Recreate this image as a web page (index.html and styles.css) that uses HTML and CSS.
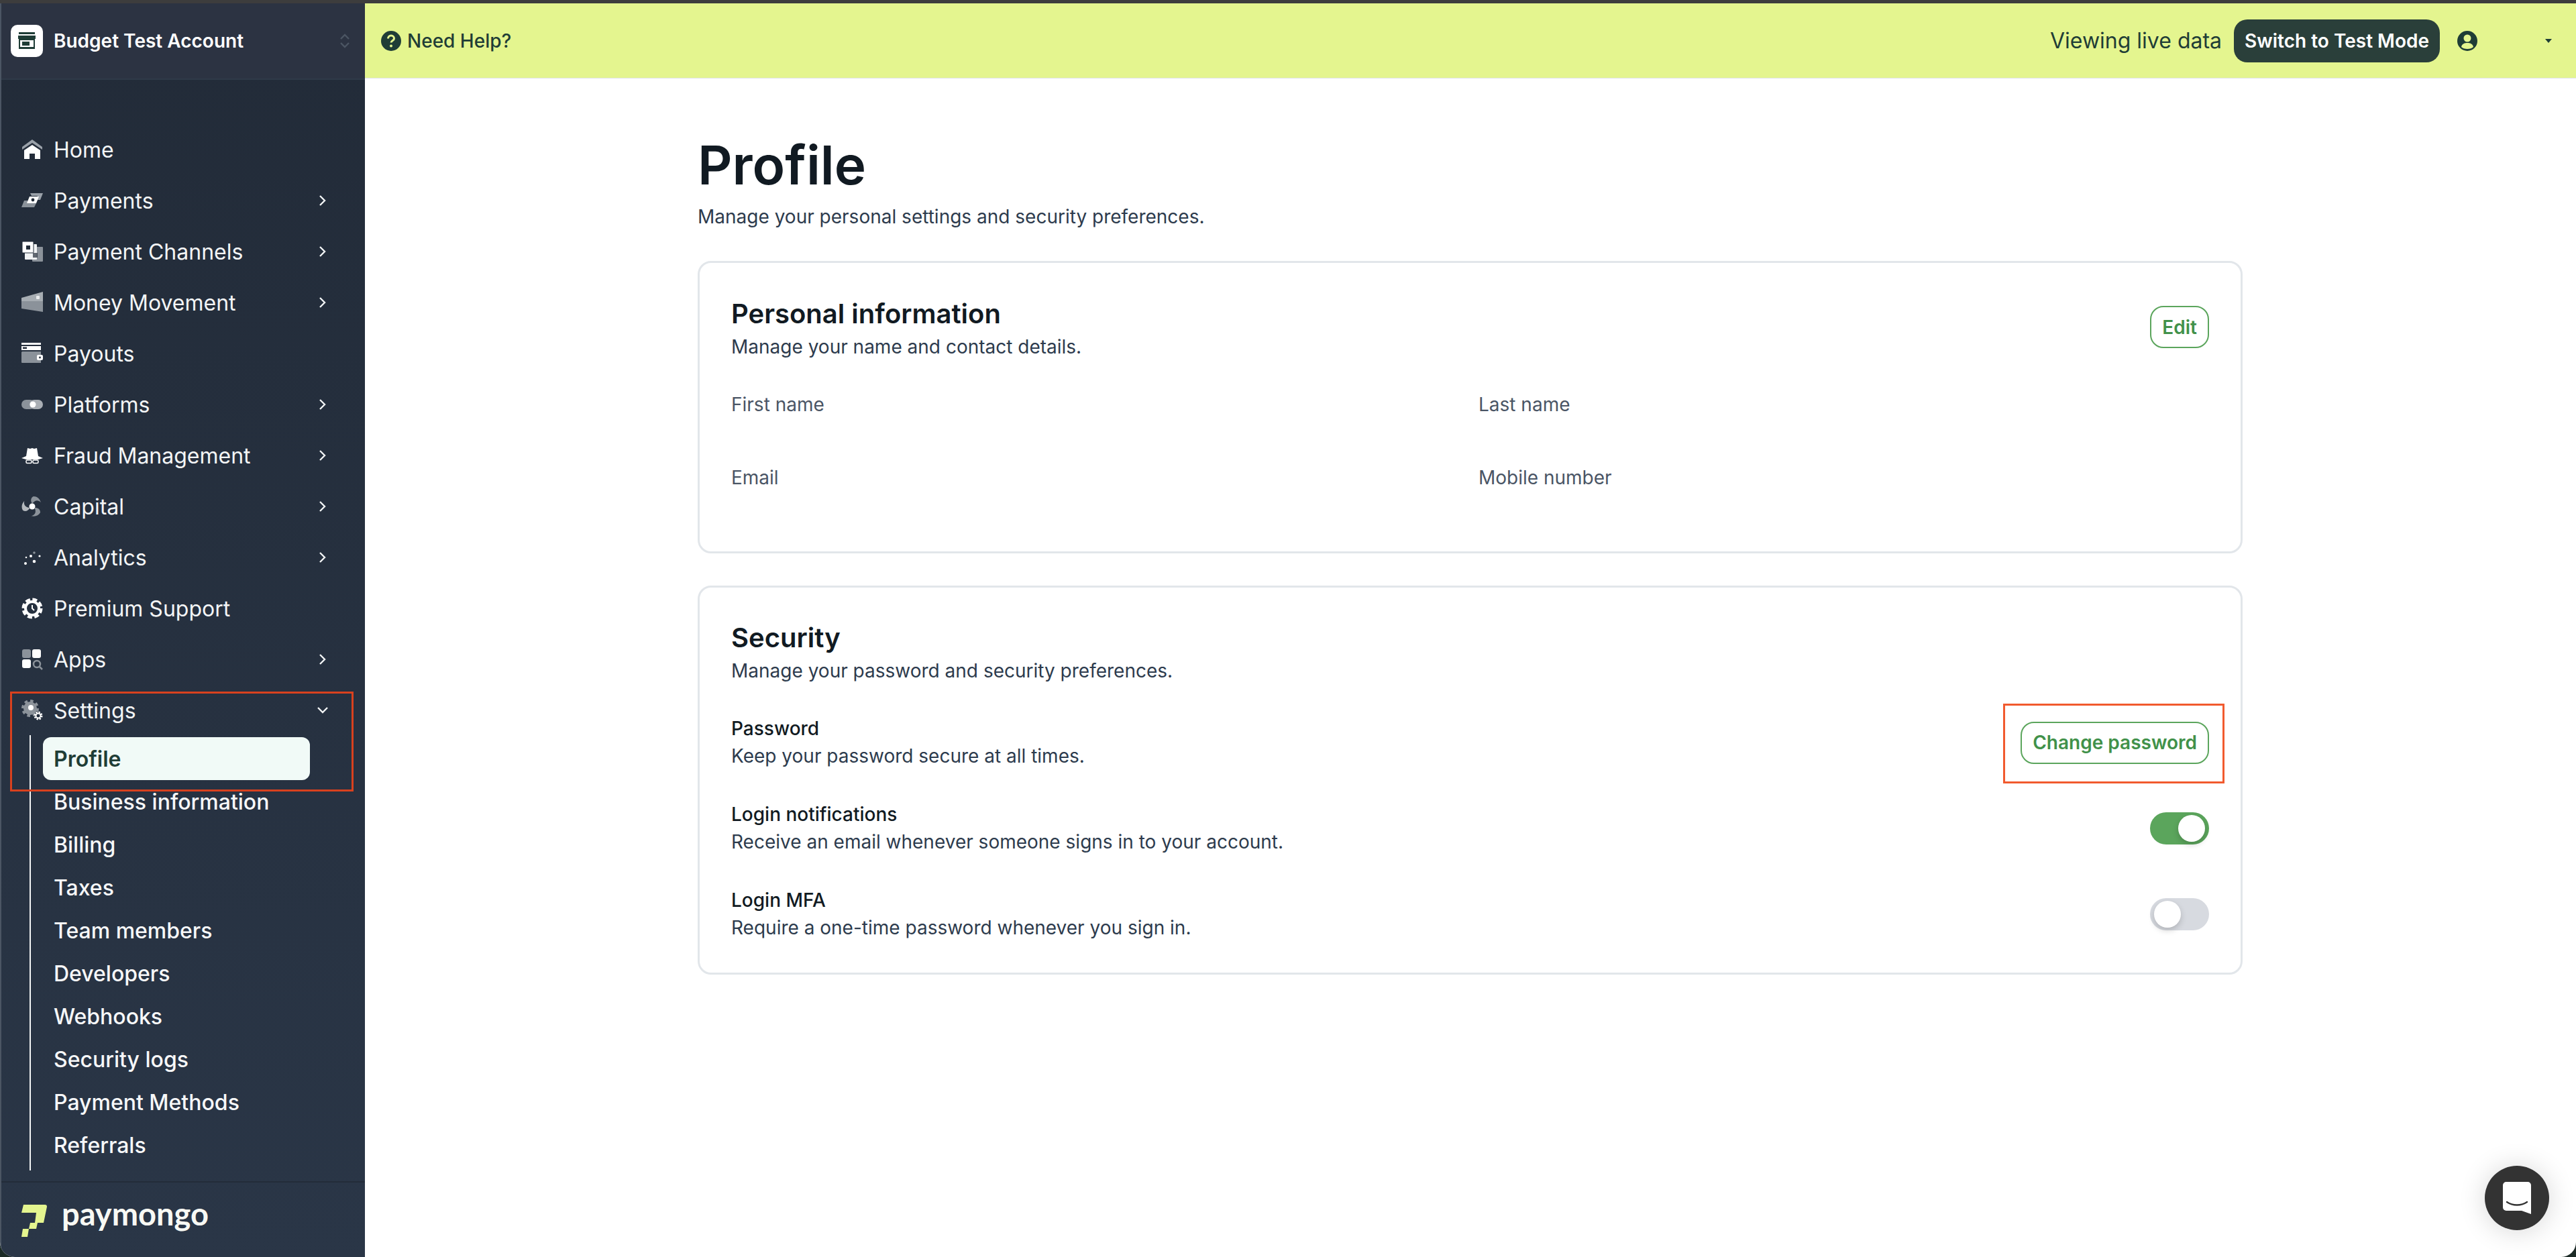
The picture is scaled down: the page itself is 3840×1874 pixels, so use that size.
FILE: index.html
```html
<!DOCTYPE html>
<html lang="en">
<head>
  <meta charset="UTF-8">
  <title>Profile - PayMongo</title>
  <link rel="stylesheet" href="styles.css">
</head>
<body>
  <div class="titlebar"></div>
  <div class="shell">
    <aside class="sidebar">
      <div class="account">
        <span class="account-logo">
          <svg width="28" height="28" viewBox="0 0 28 28"><path d="M2 1h24v3H2z" fill="#1f3d36"/><path d="M1 6h26v5h-1v15H2V11H1z" fill="#1f3d36"/><path d="M4 13h20v10H4z" fill="#fff"/><path d="M7 15h11v6H7z" fill="#1f3d36"/></svg>
        </span>
        <span class="account-name">Budget Test Account</span>
        <svg class="account-switch" width="14" height="22" viewBox="0 0 14 22" fill="none" stroke="#4b5563" stroke-width="2.4"><path d="M1 8l6-6 6 6M1 14l6 6 6-6"/></svg>
      </div>

      <nav class="nav">
        <a class="nav-item"><svg class="nav-icon" viewBox="0 0 32 32"><path d="M16 1L1 12v4L16 6l15 10v-4z" fill="#9aa1a9"/><path d="M16 9L4 17v13h8v-8h8v8h8V17z" fill="#fff"/></svg><span>Home</span></a>
        <a class="nav-item"><svg class="nav-icon" viewBox="0 0 32 32"><path d="M13 5h19l-4 10h-6l2-6h-9z" fill="#9aa1a9"/><path d="M4 16h6l-1 4h13l-3 6H0z" fill="#8b929a"/><path d="M12 10h14l-4 10H8z" fill="#fff"/><circle cx="17" cy="15" r="2.400" fill="#232c39"/></svg><span>Payments</span><svg class="nav-arrow" viewBox="0 0 12 18"><path d="M2 2l7 7-7 7"/></svg></a>
        <a class="nav-item"><svg class="nav-icon" viewBox="0 0 32 32"><rect x="16" y="9" width="16" height="22" rx="1" fill="#8b929a"/><rect x="5" y="5" width="18" height="23" rx="1" fill="#f1f3f4"/><rect x="1" y="1" width="17" height="17" rx="1" fill="#fff" stroke="#232c39" stroke-width="1"/><rect x="7" y="7" width="6" height="6" fill="#232c39"/><rect x="17" y="18" width="7" height="7" fill="#232c39" opacity=".7"/></svg><span>Payment Channels</span><svg class="nav-arrow" viewBox="0 0 12 18"><path d="M2 2l7 7-7 7"/></svg></a>
        <a class="nav-item"><svg class="nav-icon" viewBox="0 0 32 32"><path d="M0 9L32 0v14H0z" fill="#a7adb3"/><path d="M0 14h32v16L0 25z" fill="#8b929a"/><rect x="22" y="6" width="5" height="5" rx="1" fill="#e8eaec"/></svg><span>Money Movement</span><svg class="nav-arrow" viewBox="0 0 12 18"><path d="M2 2l7 7-7 7"/></svg></a>
        <a class="nav-item"><svg class="nav-icon" viewBox="0 0 32 32"><rect y="0" width="29" height="3" fill="#fff"/><rect y="5" width="29" height="6" fill="#fff"/><rect x="2" y="6.500" width="6" height="2.500" fill="#232c39"/><path d="M1 13h28v17H1a1 1 0 01-1-1V14z" fill="#8b929a"/><rect x="23" y="18" width="9" height="8" rx="2" fill="#fff"/><circle cx="27.500" cy="22" r="1.400" fill="#232c39"/></svg><span>Payouts</span></a>
        <a class="nav-item"><svg class="nav-icon" viewBox="0 0 32 32"><rect x="0" y="9" width="20" height="14" rx="7" fill="#8b929a"/><rect x="12" y="9" width="20" height="14" rx="7" fill="#a9aeb4"/><circle cx="17" cy="16" r="4.500" fill="#fff"/></svg><span>Platforms</span><svg class="nav-arrow" viewBox="0 0 12 18"><path d="M2 2l7 7-7 7"/></svg></a>
        <a class="nav-item"><svg class="nav-icon" viewBox="0 0 32 32"><path d="M9 5l4 1 3-1 3 1 4-1 2 12H7z" fill="#fff"/><path d="M0 20l7-3h18l7 3-7 2H7z" fill="#fff"/><rect x="7" y="23" width="8" height="4.500" rx="1.500" fill="none" stroke="#fff" stroke-width="1.500"/><rect x="17" y="23" width="8" height="4.500" rx="1.500" fill="none" stroke="#fff" stroke-width="1.500"/></svg><span>Fraud Management</span><svg class="nav-arrow" viewBox="0 0 12 18"><path d="M2 2l7 7-7 7"/></svg></a>
        <a class="nav-item"><svg class="nav-icon" viewBox="0 0 32 32"><g id="blade"><path d="M16 12C13 7 14 3 18 1c5 0 9 3 11 9-4-4-9-4-13 2z" fill="#8b929a"/></g><path d="M16 12C13 7 14 3 18 1c5 0 9 3 11 9-4-4-9-4-13 2z" fill="#8b929a" transform="rotate(120 16 16)"/><path d="M16 12C13 7 14 3 18 1c5 0 9 3 11 9-4-4-9-4-13 2z" fill="#b4b9be" transform="rotate(240 16 16)"/><circle cx="16" cy="16" r="4.500" fill="#fff"/></svg><span>Capital</span><svg class="nav-arrow" viewBox="0 0 12 18"><path d="M2 2l7 7-7 7"/></svg></a>
        <a class="nav-item"><svg class="nav-icon" viewBox="0 0 32 32"><g fill="#fff"><circle cx="6" cy="25" r="2"/><circle cx="7" cy="16" r="1.300"/><circle cx="14" cy="14" r="2"/><circle cx="19" cy="22" r="2.300"/><circle cx="27" cy="14" r="1.600"/></g><circle cx="19" cy="9" r="1.800" fill="#8b929a"/></svg><span>Analytics</span><svg class="nav-arrow" viewBox="0 0 12 18"><path d="M2 2l7 7-7 7"/></svg></a>
        <a class="nav-item"><svg class="nav-icon" viewBox="0 0 32 32"><circle cx="16" cy="16" r="13.500" fill="none" stroke="#fff" stroke-width="4" stroke-dasharray="7 3.600"/><circle cx="16" cy="16" r="10" fill="none" stroke="#fff" stroke-width="4"/><path d="M16 11v5l3 3" fill="none" stroke="#fff" stroke-width="2"/></svg><span>Premium Support</span></a>
        <a class="nav-item"><svg class="nav-icon" viewBox="0 0 32 32"><rect x="1" y="1" width="13" height="13" rx="3" fill="#8b929a"/><rect x="16" y="1" width="13" height="13" rx="3" fill="#fff"/><rect x="1" y="16" width="13" height="13" rx="3" fill="#fff"/><circle cx="23" cy="23" r="5" fill="none" stroke="#8b929a" stroke-width="2.500"/><path d="M27 27l4 4" stroke="#8b929a" stroke-width="2.500"/></svg><span>Apps</span><svg class="nav-arrow" viewBox="0 0 12 18"><path d="M2 2l7 7-7 7"/></svg></a>

        <div class="settings-group">
          <a class="nav-item"><svg class="nav-icon" viewBox="0 0 32 32"><circle cx="13" cy="13" r="11" fill="none" stroke="#8b929a" stroke-width="4" stroke-dasharray="4.500 4.100"/><circle cx="13" cy="13" r="10" fill="#8b929a"/><circle cx="14" cy="12" r="4" fill="#fff"/><circle cx="25" cy="24" r="5" fill="none" stroke="#fff" stroke-width="3" stroke-dasharray="2.200 1.700"/><circle cx="25" cy="24" r="3.500" fill="none" stroke="#fff" stroke-width="2"/></svg><span>Settings</span><svg class="nav-arrow" viewBox="0 0 18 12"><path d="M2 2l7 7 7-7"/></svg></a>
          <ul class="subnav">
            <li class="subnav-item active">Profile</li>
            <li class="subnav-item">Business information</li>
            <li class="subnav-item">Billing</li>
            <li class="subnav-item">Taxes</li>
            <li class="subnav-item">Team members</li>
            <li class="subnav-item">Developers</li>
            <li class="subnav-item">Webhooks</li>
            <li class="subnav-item">Security logs</li>
            <li class="subnav-item">Payment Methods</li>
            <li class="subnav-item">Referrals</li>
          </ul>
          <div class="annotation annotation-settings"></div>
        </div>
      </nav>

      <div class="sidebar-footer">
        <svg width="38" height="48" viewBox="0 0 38 48"><path d="M3 0h32a3 3 0 013 3l-5 24H20l2-15H0z" fill="#e4f58f"/><path d="M13 27h11l-2 9H11z" fill="#e4f58f"/><path d="M2 36h9l-2 12H0z" fill="#e4f58f"/></svg>
        <span class="brand">paymongo</span>
      </div>
    </aside>

    <div class="workspace">
      <header class="topbar">
        <a class="help">
          <svg width="30" height="30" viewBox="0 0 30 30"><circle cx="15" cy="15" r="15" fill="#1f3d36"/><path d="M10.500 11.500a4.500 4.500 0 119 0c0 3-4.500 3-4.500 6" fill="none" stroke="#e4f58f" stroke-width="3"/><circle cx="15" cy="22.500" r="2" fill="#e4f58f"/></svg>
          <span>Need Help?</span>
        </a>
        <div class="topbar-right">
          <span class="live-label">Viewing live data</span>
          <button class="switch-btn">Switch to Test Mode</button>
          <svg class="user-icon" width="30" height="30" viewBox="0 0 30 30"><circle cx="15" cy="15" r="15" fill="#1f3d36"/><circle cx="15" cy="11" r="5.500" fill="#e4f58f"/><path d="M6 24c1-5 5-6 9-6s8 1 9 6c-2 2-5 3-9 3s-7-1-9-3z" fill="#e4f58f"/></svg>
          <span class="caret"></span>
        </div>
      </header>

      <main class="content">
        <h1 class="page-title">Profile</h1>
        <p class="page-sub">Manage your personal settings and security preferences.</p>

        <section class="card card-personal">
          <div class="card-head">
            <div>
              <h2>Personal information</h2>
              <p>Manage your name and contact details.</p>
            </div>
            <button class="btn-outline btn-edit">Edit</button>
          </div>
          <div class="fields">
            <div class="field">First name</div>
            <div class="field">Last name</div>
            <div class="field">Email</div>
            <div class="field">Mobile number</div>
          </div>
        </section>

        <section class="card card-security">
          <div class="card-head">
            <div>
              <h2>Security</h2>
              <p>Manage your password and security preferences.</p>
            </div>
          </div>
          <div class="setting-row first">
            <div class="setting-text">
              <strong>Password</strong>
              <span>Keep your password secure at all times.</span>
            </div>
            <div class="annotated">
              <button class="btn-outline">Change password</button>
            </div>
          </div>
          <div class="setting-row">
            <div class="setting-text">
              <strong>Login notifications</strong>
              <span>Receive an email whenever someone signs in to your account.</span>
            </div>
            <span class="toggle on"><span class="knob"></span></span>
          </div>
          <div class="setting-row">
            <div class="setting-text">
              <strong>Login MFA</strong>
              <span>Require a one-time password whenever you sign in.</span>
            </div>
            <span class="toggle"><span class="knob"></span></span>
          </div>
        </section>
      </main>

      <button class="chat-launcher">
        <svg width="42" height="48" viewBox="0 0 42 48"><path d="M5 0h32a5 5 0 015 5v43l-14-5H5a5 5 0 01-5-5V5a5 5 0 015-5z" fill="#fff"/><path d="M6 30c9 6 21 6 30 0" fill="none" stroke="#333" stroke-width="2.400" stroke-linecap="round"/></svg>
      </button>
    </div>
  </div>
</body>
</html>
```

FILE: styles.css
```css
* {
  box-sizing: border-box;
}

html, body {
  margin: 0;
  height: 100%;
}

body {
  display: flex;
  flex-direction: column;
  background: #1c2b27;
  font-family: 'Inter', 'Liberation Sans', sans-serif;
  font-size: 28px;
  color: #1f2937;
  overflow: hidden;
}

.titlebar {
  height: 5px;
  flex: none;
  background: #3d3d3d;
}

.shell {
  flex: 1;
  display: flex;
  min-height: 0;
  border-radius: 0 0 22px 22px;
  overflow: hidden;
  background: #fff;
}

/* sidebar */
.sidebar {
  width: 544px;
  flex: none;
  display: flex;
  flex-direction: column;
  border-left: 2px solid #4b5563;
  background: linear-gradient(#222b38, #2a3647);
  color: #f3f5f6;
  font-size: 32px;
}

.account {
  height: 114px;
  flex: none;
  display: flex;
  align-items: center;
  padding-left: 14px;
  background: #2c3342;
  border-bottom: 2px solid #2f3a49;
}

.account-logo {
  width: 48px;
  height: 48px;
  display: flex;
  align-items: center;
  justify-content: center;
  border-radius: 10px;
  background: #fff;
}

.account-name {
  margin-left: 16px;
  font-size: 28px;
  font-weight: 600;
  color: #fff;
}

.account-switch {
  margin-left: auto;
  margin-right: 23px;
}

.nav {
  flex: 1;
  padding-top: 66px;
}

.nav-item {
  height: 76px;
  display: flex;
  align-items: center;
  padding-left: 30px;
}

.nav-icon {
  width: 32px;
  height: 32px;
  flex: none;
  margin-right: 16px;
}

.nav-arrow {
  width: 12px;
  height: 18px;
  margin-left: auto;
  margin-right: 57px;
  fill: none;
  stroke: #f3f5f6;
  stroke-width: 2.400;
}

.settings-group .nav-arrow {
  width: 18px;
  height: 12px;
  margin-right: 54px;
}

.settings-group {
  position: relative;
}

.annotation-settings {
  position: absolute;
  left: 13px;
  top: 10px;
  width: 512px;
  height: 149px;
  border: 3px solid #d9411e;
  pointer-events: none;
}

.subnav {
  list-style: none;
  margin: -1px 0 0 42px;
  padding: 3px 0 6px;
  border-left: 2px solid #f3f5f6;
}

.subnav-item {
  height: 64px;
  display: flex;
  align-items: center;
  margin-left: 18px;
  padding-left: 16px;
  width: 398px;
  border-radius: 12px;
  font-weight: 500;
  color: #f7f8f9;
}

.subnav-item.active {
  background: #f1faf7;
  color: #1f3d36;
  font-weight: 600;
}

.sidebar-footer {
  height: 113px;
  flex: none;
  display: flex;
  align-items: flex-start;
  padding: 33px 0 0 30px;
  border-top: 2px solid #232c39;
}

.brand {
  margin: -17px 0 0 22px;
  font-family: 'Lato', sans-serif;
  font-size: 47px;
  font-weight: 700;
  line-height: 60px;
  color: #f8f9f4;
}

/* top bar */
.workspace {
  flex: 1;
  position: relative;
  min-width: 0;
}

.topbar {
  height: 112px;
  display: flex;
  align-items: center;
  justify-content: space-between;
  padding: 0 36px 0 24px;
  background: #e4f58f;
  border-bottom: 1px solid #dfe3e6;
  color: #1f3d36;
}

.help {
  display: flex;
  align-items: center;
  gap: 9px;
  font-size: 28px;
  font-weight: 500;
}

.topbar-right {
  display: flex;
  align-items: center;
}

.live-label {
  font-size: 32px;
}

.switch-btn {
  height: 64px;
  margin-left: 18px;
  padding: 0 16px;
  border: 0;
  border-radius: 20px;
  background: #2a3f3a;
  color: #fff;
  font: 600 28px 'Inter', sans-serif;
}

.user-icon {
  margin-left: 26px;
}

.caret {
  margin-left: 101px;
  border-left: 5px solid transparent;
  border-right: 5px solid transparent;
  border-top: 6px solid #1f3d36;
}

/* main content */
.content {
  width: 2303px;
  margin-left: 496px;
}

.page-title {
  margin: 0;
  padding-top: 84px;
  font-size: 80px;
  line-height: 90px;
  font-weight: 600;
  color: #111a22;
}

.page-sub {
  margin: 0;
  padding-top: 10px;
  line-height: 44px;
  color: #2d3b4d;
}

.card {
  border: 3px solid #e2e6ea;
  border-radius: 20px;
  padding: 48px 47px 0;
}

.card-personal {
  height: 436px;
  margin-top: 44px;
}

.card-security {
  height: 580px;
  margin-top: 48px;
  padding-top: 47px;
}

.card-head {
  display: flex;
  justify-content: space-between;
  align-items: flex-start;
}

.card-head h2 {
  margin: 0;
  font-size: 40px;
  line-height: 55px;
  font-weight: 600;
  color: #111a22;
}

.card-head p {
  margin: 0;
  line-height: 44px;
  color: #2d3b4d;
}

.btn-outline {
  height: 63px;
  padding: 0 16px;
  border: 2px solid #5ba55c;
  border-radius: 20px;
  background: #fff;
  color: #41914a;
  font: 600 28px 'Inter', sans-serif;
}

.btn-edit {
  margin-top: 16px;
}

.fields {
  display: grid;
  grid-template-columns: 1114px 1fr;
  grid-auto-rows: 109px;
  margin-top: 42px;
}

.field {
  line-height: 44px;
  color: #4a5565;
}

.setting-row {
  height: 128px;
  display: flex;
  align-items: center;
  justify-content: space-between;
}

.setting-row.first {
  margin-top: 21px;
}

.setting-text {
  display: flex;
  flex-direction: column;
  line-height: 41px;
  color: #2d3b4d;
}

.setting-text strong {
  font-weight: 500;
  color: #111a22;
}

.annotated {
  position: relative;
  display: flex;
}

.annotated::after {
  content: "";
  position: absolute;
  inset: -27px -23px -29px -26px;
  border: 3px solid #f15a2e;
  pointer-events: none;
}

.toggle {
  width: 88px;
  height: 48px;
  display: flex;
  align-items: center;
  padding: 0 6px;
  border-radius: 24px;
  background: #d7dae0;
}

.toggle.on {
  justify-content: flex-end;
  background: #5ba55c;
}

.knob {
  width: 40px;
  height: 40px;
  border-radius: 50%;
  background: #fff;
  box-shadow: 0 4px 10px rgba(0, 0, 0, 0.18);
}

.chat-launcher {
  position: absolute;
  right: 40px;
  bottom: 40px;
  width: 96px;
  height: 96px;
  display: flex;
  align-items: center;
  justify-content: center;
  border: 0;
  border-radius: 50%;
  background: #333;
  box-shadow: 0 2px 40px rgba(0, 0, 0, 0.16);
}
```
